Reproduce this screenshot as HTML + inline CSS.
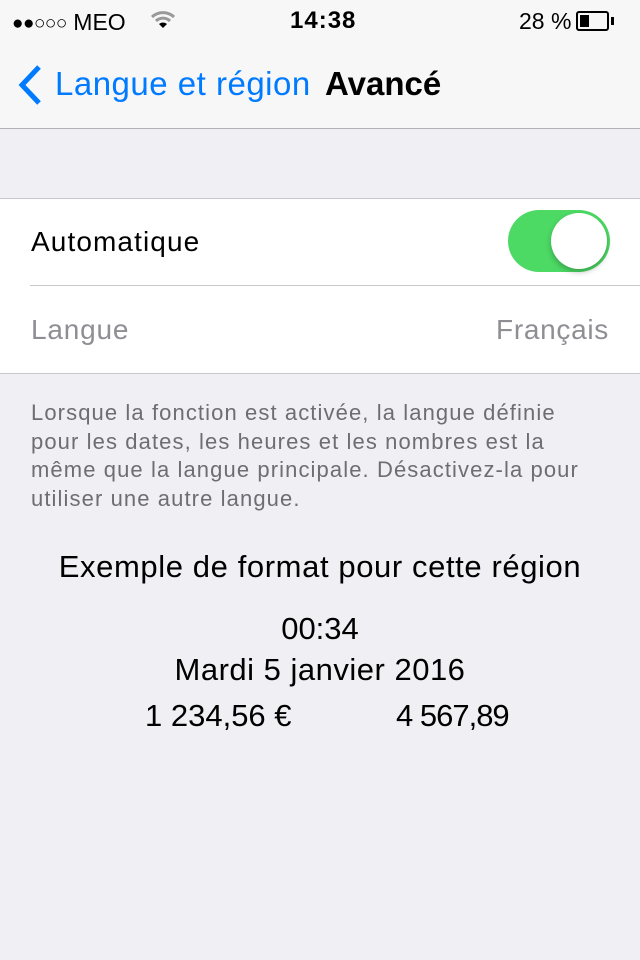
<!DOCTYPE html>
<html><head><meta charset="utf-8"><style>
*{margin:0;padding:0;box-sizing:border-box}
body{width:640px;height:960px;background:#efeff4;font-family:"Liberation Sans",sans-serif;position:relative;overflow:hidden}
.abs{position:absolute;white-space:nowrap}
</style></head><body>
<div class="abs" style="left:0;top:0;width:640px;height:129px;background:#f7f7f7;border-bottom:1px solid #b2b2b2"></div>
<div class="abs" style="left:12px;top:9px;font-size:23px;color:#000"><span style="font-size:19px;letter-spacing:-0.5px;position:relative;top:-1px">●●○○○</span> MEO</div>
<svg class="abs" style="left:150px;top:10px" width="26" height="20" viewBox="0 0 26 20"><path d="M2 7a16 16 0 0 1 22 0M6 11a10 10 0 0 1 14 0" stroke="#999" stroke-width="3" fill="none"/><path d="M9 14a6 6 0 0 1 8 0L13 18z" fill="#000"/></svg>
<div class="abs" style="left:290px;top:7px;font-size:24px;font-weight:bold;letter-spacing:1px">14:38</div>
<div class="abs" style="left:519px;top:8px;font-size:23px">28 %</div>
<div class="abs" style="left:576px;top:11px;width:33px;height:20px;border:2px solid #000;border-radius:3px"><div style="margin:2px;width:9px;height:12px;background:#000"></div></div>
<div class="abs" style="left:611px;top:17px;width:3px;height:8px;background:#000"></div>
<svg class="abs" style="left:14px;top:64px" width="30" height="42" viewBox="0 0 30 42"><path d="M25 3 8 21l17 18" stroke="#007aff" stroke-width="5" fill="none"/></svg>
<div class="abs" style="left:55px;top:65px;font-size:33px;color:#007aff;letter-spacing:0.5px">Langue et région</div>
<div class="abs" style="left:325px;top:65px;font-size:33px;font-weight:bold;color:#000">Avancé</div>
<div class="abs" style="left:0;top:198px;width:640px;height:176px;background:#fff;border-top:1px solid #c8c7cc;border-bottom:1px solid #c8c7cc"></div>
<div class="abs" style="left:30px;top:285px;width:610px;height:1px;background:#c8c7cc"></div>
<div class="abs" style="left:31px;top:226px;font-size:28px;letter-spacing:1.1px">Automatique</div>
<div class="abs" style="left:508px;top:210px;width:102px;height:62px;border-radius:31px;background:#4cd964"></div>
<div class="abs" style="left:551px;top:213px;width:56px;height:56px;border-radius:50%;background:#fff;box-shadow:0 3px 6px rgba(0,0,0,.25)"></div>
<div class="abs" style="left:31px;top:314px;font-size:28px;color:#8e8e93;letter-spacing:0.8px">Langue</div>
<div class="abs" style="right:31px;top:314px;font-size:28px;color:#8e8e93;letter-spacing:0.7px">Français</div>
<div class="abs" style="left:31px;top:399px;font-size:22px;line-height:28.5px;color:#6d6d72;letter-spacing:1.1px">Lorsque la fonction est activée, la langue définie<br>pour les dates, les heures et les nombres est la<br>même que la langue principale. Désactivez-la pour<br>utiliser une autre langue.</div>
<div class="abs" style="left:0;width:640px;text-align:center;top:549px;font-size:31px;letter-spacing:0.6px">Exemple de format pour cette région</div>
<div class="abs" style="left:0;width:640px;text-align:center;top:611px;font-size:31px">00:34</div>
<div class="abs" style="left:0;width:640px;text-align:center;top:652px;font-size:31px;letter-spacing:0.5px">Mardi 5 janvier 2016</div>
<div class="abs" style="left:145px;top:698px;font-size:31px">1 234,56 €</div>
<div class="abs" style="left:396px;top:698px;font-size:31px;letter-spacing:-1px">4 567,89</div>
</body></html>
